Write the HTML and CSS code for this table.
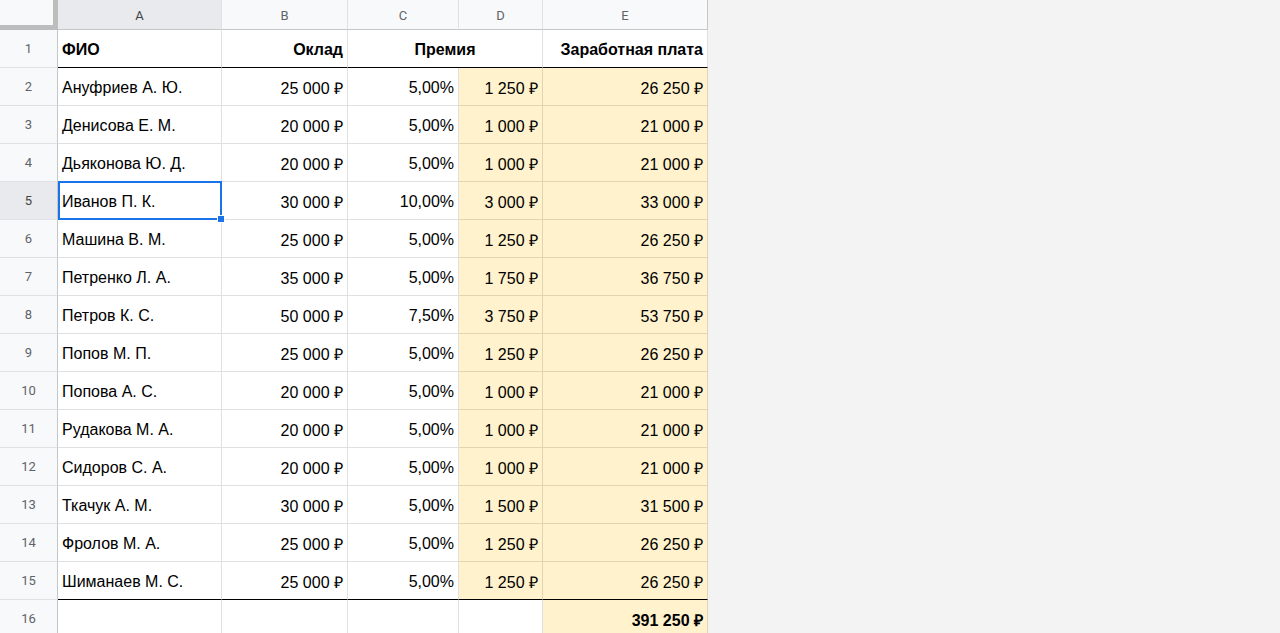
FILE: index.html
```html
<!DOCTYPE html>
<html lang="ru">
<head>
<meta charset="utf-8">
<title>Заработная плата</title>
<link rel="stylesheet" href="styles.css">
</head>
<body>
<div class="sheet">
  <div class="corner"></div>
  <div class="ch ch-sel">A</div>
  <div class="ch">B</div>
  <div class="ch">C</div>
  <div class="ch">D</div>
  <div class="ch ch-last">E</div>

  <div class="rh">1</div>
  <div class="c b hr">ФИО</div>
  <div class="c b r hr">Оклад</div>
  <div class="c b ctr hr span2">Премия</div>
  <div class="c b r hr">Заработная плата</div>

  <div class="rh">2</div><div class="c">Ануфриев А. Ю.</div><div class="c r">25 000 ₽</div><div class="c r">5,00%</div><div class="c r y">1 250 ₽</div><div class="c r y">26 250 ₽</div>
  <div class="rh">3</div><div class="c">Денисова Е. М.</div><div class="c r">20 000 ₽</div><div class="c r">5,00%</div><div class="c r y">1 000 ₽</div><div class="c r y">21 000 ₽</div>
  <div class="rh">4</div><div class="c">Дьяконова Ю. Д.</div><div class="c r">20 000 ₽</div><div class="c r">5,00%</div><div class="c r y">1 000 ₽</div><div class="c r y">21 000 ₽</div>
  <div class="rh rh-sel">5</div><div class="c sel">Иванов П. К.</div><div class="c r">30 000 ₽</div><div class="c r">10,00%</div><div class="c r y">3 000 ₽</div><div class="c r y">33 000 ₽</div>
  <div class="rh">6</div><div class="c">Машина В. М.</div><div class="c r">25 000 ₽</div><div class="c r">5,00%</div><div class="c r y">1 250 ₽</div><div class="c r y">26 250 ₽</div>
  <div class="rh">7</div><div class="c">Петренко Л. А.</div><div class="c r">35 000 ₽</div><div class="c r">5,00%</div><div class="c r y">1 750 ₽</div><div class="c r y">36 750 ₽</div>
  <div class="rh">8</div><div class="c">Петров К. С.</div><div class="c r">50 000 ₽</div><div class="c r">7,50%</div><div class="c r y">3 750 ₽</div><div class="c r y">53 750 ₽</div>
  <div class="rh">9</div><div class="c">Попов М. П.</div><div class="c r">25 000 ₽</div><div class="c r">5,00%</div><div class="c r y">1 250 ₽</div><div class="c r y">26 250 ₽</div>
  <div class="rh">10</div><div class="c">Попова А. С.</div><div class="c r">20 000 ₽</div><div class="c r">5,00%</div><div class="c r y">1 000 ₽</div><div class="c r y">21 000 ₽</div>
  <div class="rh">11</div><div class="c">Рудакова М. А.</div><div class="c r">20 000 ₽</div><div class="c r">5,00%</div><div class="c r y">1 000 ₽</div><div class="c r y">21 000 ₽</div>
  <div class="rh">12</div><div class="c">Сидоров С. А.</div><div class="c r">20 000 ₽</div><div class="c r">5,00%</div><div class="c r y">1 000 ₽</div><div class="c r y">21 000 ₽</div>
  <div class="rh">13</div><div class="c">Ткачук А. М.</div><div class="c r">30 000 ₽</div><div class="c r">5,00%</div><div class="c r y">1 500 ₽</div><div class="c r y">31 500 ₽</div>
  <div class="rh">14</div><div class="c">Фролов М. А.</div><div class="c r">25 000 ₽</div><div class="c r">5,00%</div><div class="c r y">1 250 ₽</div><div class="c r y">26 250 ₽</div>
  <div class="rh">15</div><div class="c hr">Шиманаев М. С.</div><div class="c r hr">25 000 ₽</div><div class="c r hr">5,00%</div><div class="c r y hr">1 250 ₽</div><div class="c r y hr">26 250 ₽</div>
  <div class="rh">16</div><div class="c"></div><div class="c"></div><div class="c"></div><div class="c"></div><div class="c r y b">391 250 ₽</div>
</div>
</body>
</html>
```
FILE: styles.css
```css
html, body {
  margin: 0;
  padding: 0;
  background: #f3f3f3;
  height: 100%;
  overflow: hidden;
}
.sheet {
  display: grid;
  grid-template-columns: 58px 164px 126px 111px 84px 165px;
  grid-template-rows: 30px;
  grid-auto-rows: 38px;
  width: 708px;
  background: #fff;
  font-family: "Liberation Sans", Arial, sans-serif;
  font-size: 16px;
  color: #000;
}
.corner {
  box-sizing: border-box;
  background: #f8f9fa;
  border-right: 5px solid #bdbdbd;
  border-bottom: 5px solid #bdbdbd;
}
.ch {
  box-sizing: border-box;
  background: #f8f9fa;
  border-right: 1px solid #e1e1e1;
  border-bottom: 1px solid #c4c7c5;
  font-family: Roboto, "Liberation Sans", sans-serif;
  font-size: 13px;
  color: #5f6368;
  display: flex;
  align-items: center;
  justify-content: center;
  padding-top: 1px;
}
.ch-last { border-right: 1px solid #c4c7c5; }
.ch-sel { background: #e8eaed; color: #444; }
.rh {
  box-sizing: border-box;
  background: #f8f9fa;
  border-right: 1px solid #c4c7c5;
  border-bottom: 1px solid #e1e1e1;
  font-family: Roboto, "Liberation Sans", sans-serif;
  font-size: 13px;
  color: #5f6368;
  display: flex;
  align-items: center;
  justify-content: center;
}
.rh-sel { background: #e8eaed; color: #444; }
.c {
  box-sizing: border-box;
  border-right: 1px solid rgba(0,0,0,0.12);
  border-bottom: 1px solid rgba(0,0,0,0.12);
  display: flex;
  align-items: center;
  padding: 2px 4px 0 4px;
  white-space: nowrap;
  overflow: hidden;
}
.c.r { justify-content: flex-end; }
.c.ctr { justify-content: center; }
.c.b { font-weight: bold; }
.c.y { background: #fff2cc; }
.c.hr { border-bottom: 1px solid #000; }
.span2 { grid-column: span 2; }
.sel {
  position: relative;
  overflow: visible;
}
.sel::after {
  content: "";
  position: absolute;
  top: -1px;
  left: 0;
  right: -1px;
  bottom: -1px;
  border: 2px solid #1a73e8;
  pointer-events: none;
}
.sel::before {
  content: "";
  position: absolute;
  right: -4px;
  bottom: -4px;
  width: 6px;
  height: 6px;
  background: #1a73e8;
  border: 1px solid #fff;
  z-index: 2;
}
```
